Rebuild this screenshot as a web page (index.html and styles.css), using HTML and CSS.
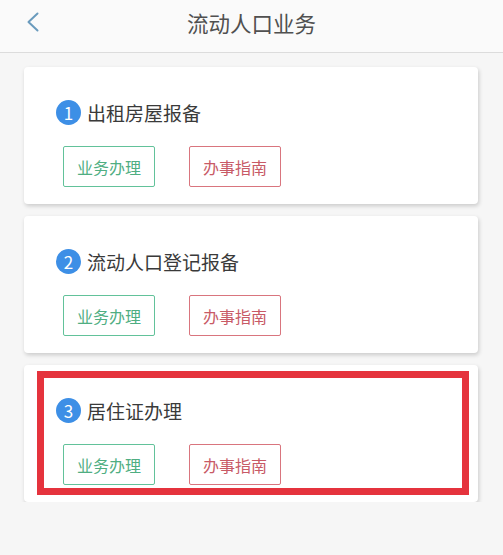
FILE: index.html
```html
<!DOCTYPE html>
<html lang="zh-CN">
  <head>
    <meta charset="utf-8">
    <title>流动人口业务</title>
    <link rel="stylesheet" href="styles.css">
  </head>

  <body>
    <header class="topbar">
      <svg class="back" width="14" height="22" viewBox="0 0 14 22">
        <polyline points="11.5,2.5 2.5,11 11.5,19.5" fill="none" stroke="#6a9bbd" stroke-width="2" stroke-linecap="round" stroke-linejoin="round" />
      </svg>
      <h1 class="title">流动人口业务</h1>
    </header>

    <main class="list">
      <!-- 业务卡片 -->
      <div class="card">
        <div class="cardTitle"><span class="num">1</span>出租房屋报备</div>
        <div class="actions">
          <button class="btn btnDo">业务办理</button>
          <button class="btn btnGuide">办事指南</button>
        </div>
      </div>

      <div class="card">
        <div class="cardTitle"><span class="num">2</span>流动人口登记报备</div>
        <div class="actions">
          <button class="btn btnDo">业务办理</button>
          <button class="btn btnGuide">办事指南</button>
        </div>
      </div>

      <div class="card marked">
        <div class="cardTitle"><span class="num">3</span>居住证办理</div>
        <div class="actions">
          <button class="btn btnDo">业务办理</button>
          <button class="btn btnGuide">办事指南</button>
        </div>
        <div class="markBox"></div>
      </div>
    </main>
  </body>
</html>
```

FILE: styles.css
```css
body {
  margin: 0;
  background: #f6f6f6;
  font-family: "Noto Sans CJK SC", "Noto Sans", sans-serif;
}
.topbar {
  position: relative;
  display: flex;
  align-items: center;
  justify-content: center;
  height: 52px;
  background: #fafafa;
  border-bottom: 1px solid #dcdcdc;
}
.back {
  position: absolute;
  left: 26px;
  top: 11px;
}
.title {
  margin: 0 0 8px;
  font-size: 21.5px;
  font-weight: normal;
  color: #505050;
}
.list {
  display: flex;
  flex-flow: column;
  gap: 12px;
  padding: 14px 25px 0 24px;
}
.card {
  position: relative;
  height: 137px;
  box-sizing: border-box;
  padding: 33px 0 0 32px;
  border-radius: 4px;
  background: #fff;
  box-shadow: 1px 2px 4px rgba(0, 0, 0, 0.18);
}
.cardTitle {
  display: flex;
  align-items: center;
  height: 24px;
  font-size: 19px;
  color: #3a3a3a;
}
.num {
  display: inline-flex;
  align-items: center;
  justify-content: center;
  width: 25px;
  height: 25px;
  margin-right: 6px;
  border-radius: 50%;
  background: #3d8fe6;
  color: #fff;
  font-size: 17px;
}
.actions {
  display: flex;
  gap: 34px;
  margin: 22px 0 0 7px;
}
.btn {
  width: 92px;
  height: 41px;
  padding: 0;
  border-radius: 2px;
  background: #fff;
  font-family: inherit;
  font-size: 16px;
}
.btnDo {
  border: 1px solid #62c29a;
  color: #4fae82;
}
.btnGuide {
  border: 1px solid #d9757e;
  color: #c85a66;
}
.markBox {
  position: absolute;
  left: 13px;
  top: 6px;
  right: 9px;
  bottom: 7px;
  border: 7px solid #e5333d;
}
```
